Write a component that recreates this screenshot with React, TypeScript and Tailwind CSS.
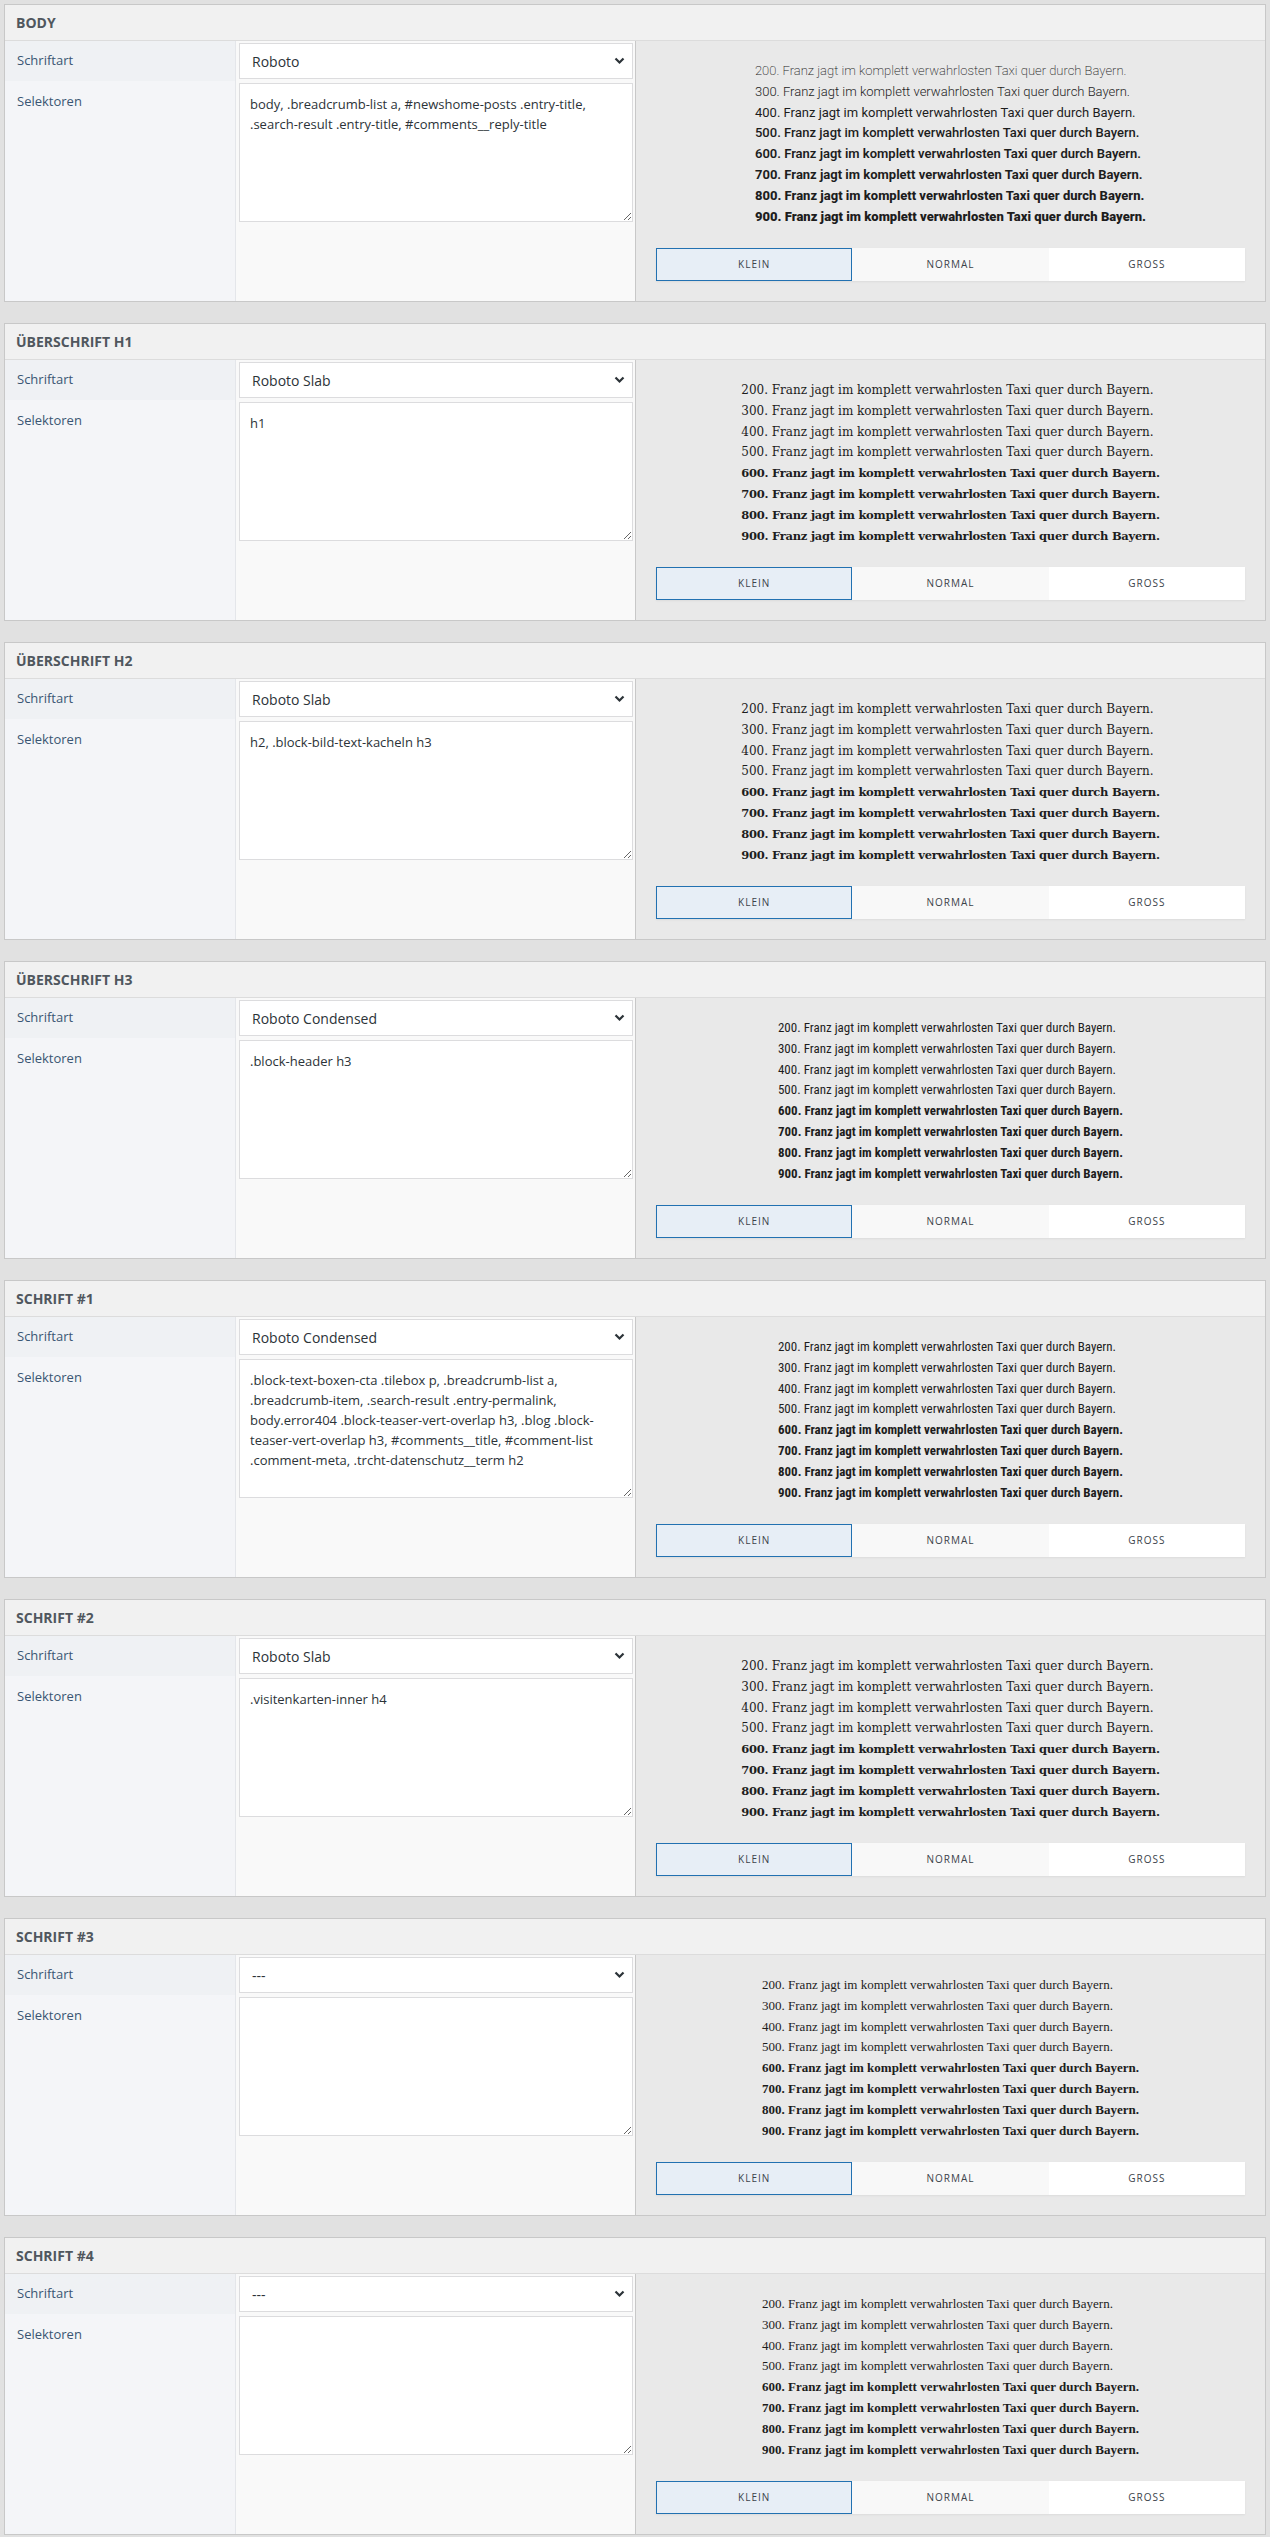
import React from "react";

const weights = [
  { n: 200, cls: "font-extralight", bold: false },
  { n: 300, cls: "font-light", bold: false },
  { n: 400, cls: "font-normal", bold: false },
  { n: 500, cls: "font-medium", bold: false },
  { n: 600, cls: "font-semibold", bold: true },
  { n: 700, cls: "font-bold", bold: true },
  { n: 800, cls: "font-extrabold", bold: true },
  { n: 900, cls: "font-black", bold: true },
];

const previewFonts: Record<string, string> = {
  roboto: "font-['Roboto',sans-serif] text-[13px]",
  slab: "font-['Roboto_Slab','DejaVu_Serif',serif] text-[12px]",
  cond: "font-['Roboto_Condensed','Roboto',sans-serif] text-[13px]",
  serif: "font-['Liberation_Serif','Times_New_Roman',serif] text-[13px]",
};

// line classes per preview font: regular lines and bold lines
const lineClass = (preview: string, w: (typeof weights)[number]) => {
  if (preview === "roboto") return w.cls;
  if (preview === "slab")
    return w.bold ? "font-bold text-[11.5px] tracking-[-0.25px]" : "font-normal";
  return w.bold ? "font-bold" : "font-normal";
};

const sections = [
  {
    title: "BODY",
    font: "Roboto",
    preview: "roboto",
    selectors:
      "body, .breadcrumb-list a, #newshome-posts .entry-title, .search-result .entry-title, #comments__reply-title",
  },
  { title: "ÜBERSCHRIFT H1", font: "Roboto Slab", preview: "slab", selectors: "h1" },
  {
    title: "ÜBERSCHRIFT H2",
    font: "Roboto Slab",
    preview: "slab",
    selectors: "h2, .block-bild-text-kacheln h3",
  },
  {
    title: "ÜBERSCHRIFT H3",
    font: "Roboto Condensed",
    preview: "cond",
    selectors: ".block-header h3",
  },
  {
    title: "SCHRIFT #1",
    font: "Roboto Condensed",
    preview: "cond",
    selectors:
      ".block-text-boxen-cta .tilebox p, .breadcrumb-list a, .breadcrumb-item, .search-result .entry-permalink, body.error404 .block-teaser-vert-overlap h3, .blog .block-teaser-vert-overlap h3, #comments__title, #comment-list .comment-meta, .trcht-datenschutz__term h2",
  },
  {
    title: "SCHRIFT #2",
    font: "Roboto Slab",
    preview: "slab",
    selectors: ".visitenkarten-inner h4",
  },
  { title: "SCHRIFT #3", font: "---", preview: "serif", selectors: "" },
  { title: "SCHRIFT #4", font: "---", preview: "serif", selectors: "" },
];

const FontSelect = ({ value }: { value: string }) => (
  <div className="relative h-[36px]">
    <select
      defaultValue={value}
      className="h-full w-full appearance-none border border-[#dcdcde] bg-white pl-[12px] pr-8 text-[14px] text-[#2c3338] outline-none"
    >
      <option>{value}</option>
    </select>
    <svg
      className="pointer-events-none absolute right-[8px] top-[14px]"
      width="11"
      height="8"
      viewBox="0 0 11 8"
    >
      <path d="M1.5 1.5l4 4 4-4" fill="none" stroke="#2c3338" strokeWidth="2.2" />
    </svg>
  </div>
);

const SizeButtons = () => (
  <div className="grid grid-cols-3 h-[33px] shadow-[0_1px_2px_rgba(0,0,0,0.06)]">
    <div className="flex items-center justify-center border border-[#2271b1] bg-[#e7eef6] text-[10px] tracking-[1px] text-[#3c434a]">
      KLEIN
    </div>
    <div className="flex items-center justify-center bg-[#f8f8f8] text-[10px] tracking-[1px] text-[#3c434a]">
      NORMAL
    </div>
    <div className="flex items-center justify-center bg-white text-[10px] tracking-[1px] text-[#3c434a]">
      GROSS
    </div>
  </div>
);

const Section = ({ s }: { s: (typeof sections)[number] }) => (
  <div className="h-[298px] border border-[#c8c8c8] bg-white flex flex-col">
    <div className="h-[36px] shrink-0 border-b border-[#dcdcdc] bg-[#f1f1f1] px-[11px] flex items-center text-[14px] font-bold text-[#50575e]">
      {s.title}
    </div>
    <div className="flex flex-1">
      <div className="w-[630px] flex flex-col">
        <div className="flex h-[40px]">
          <div className="w-[231px] border-r border-[#e4e6ea] bg-[#eff1f4] px-[12px] flex items-center text-[13px] text-[#3a5673]">
            Schriftart
          </div>
          <div className="flex-1 bg-[#f9f9f9] pl-[3px] pr-[2px] pt-[2px]">
            <FontSelect value={s.font} />
          </div>
        </div>
        <div className="flex flex-1">
          <div className="w-[231px] border-r border-[#e4e6ea] bg-[#f4f5f8] px-[12px] pt-[10px] text-[13px] leading-[20px] text-[#3a5673]">
            Selektoren
          </div>
          <div className="flex-1 bg-[#f9f9f9] pl-[3px] pr-[2px] pt-[2px]">
            <textarea
              readOnly
              defaultValue={s.selectors}
              className="block h-[139px] w-full border border-[#dcdcde] bg-white px-[10px] py-[10px] text-[13px] leading-[20px] text-[#2c3338] outline-none"
            />
          </div>
        </div>
      </div>
      <div className="flex-1 border-l border-[#c8c8c8] bg-[#e9e9e9] p-5 flex flex-col">
        <div className="flex justify-center">
          <div className={`${previewFonts[s.preview]} leading-[20.8px] text-[#1d1d1d]`}>
            {weights.map((w) => (
              <div key={w.n} className={lineClass(s.preview, w)}>
                {w.n}. Franz jagt im komplett verwahrlosten Taxi quer durch Bayern.
              </div>
            ))}
          </div>
        </div>
        <div className="mt-[21px]">
          <SizeButtons />
        </div>
      </div>
    </div>
  </div>
);

export default function App() {
  return (
    <div className="min-h-[2537px] bg-[#e1e1e1] p-1 font-['Segoe_UI','Open_Sans',sans-serif]">
      <div className="flex flex-col gap-[21px]">
        {sections.map((s) => (
          <Section key={s.title} s={s} />
        ))}
      </div>
    </div>
  );
}
